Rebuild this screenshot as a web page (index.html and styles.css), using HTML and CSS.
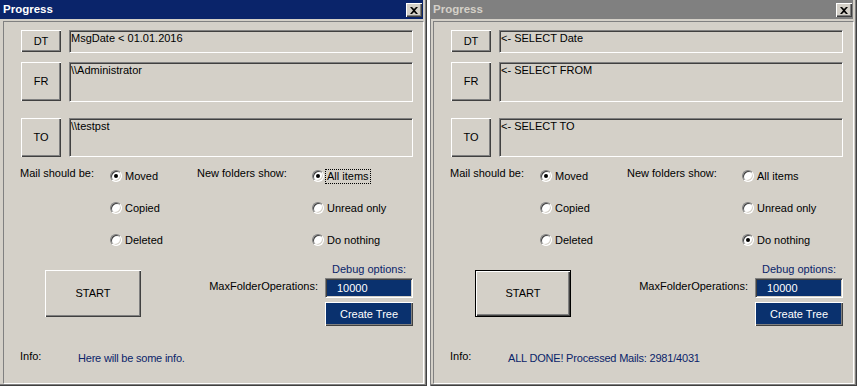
FILE: index.html
```html
<!DOCTYPE html>
<html lang="en">
<head>
    <meta charset="UTF-8">
    <title>Progress</title>
    <link rel="stylesheet" href="styles.css">
</head>
<body>
<div class="desktop">
    <div class="window">
        <div class="titlebar">
            <span class="title">Progress</span>
            <button class="close-btn">
                <svg width="8" height="7" viewBox="0 0 8 7"><path d="M0 0h2l2 2 2-2h2L5 3.5 8 7H6L4 5 2 7H0l3-3.5z" fill="#000"/></svg>
            </button>
        </div>
        <div class="client">
            <div class="query-row row-dt">
                <button class="btn query-btn">DT</button>
                <div class="field">MsgDate &lt; 01.01.2016</div>
            </div>
            <div class="query-row row-fr">
                <button class="btn query-btn">FR</button>
                <div class="field">\\Administrator</div>
            </div>
            <div class="query-row row-to">
                <button class="btn query-btn">TO</button>
                <div class="field">\\testpst</div>
            </div>
            <div class="options">
                <span class="opt-label">Mail should be:</span>
                <label class="radio-item"><span class="radio checked"></span><span class="radio-text">Moved</span></label>
                <span class="opt-label">New folders show:</span>
                <label class="radio-item"><span class="radio checked"></span><span class="radio-text focused">All items</span></label>

                <span></span>
                <label class="radio-item"><span class="radio"></span><span class="radio-text">Copied</span></label>
                <span></span>
                <label class="radio-item"><span class="radio"></span><span class="radio-text">Unread only</span></label>

                <span></span>
                <label class="radio-item"><span class="radio"></span><span class="radio-text">Deleted</span></label>
                <span></span>
                <label class="radio-item"><span class="radio"></span><span class="radio-text">Do nothing</span></label>
            </div>
            <div class="lower">
                <button class="btn start-btn">START</button>
                <div class="debug">
                    <span class="debug-title">Debug options:</span>
                    <span class="max-label">MaxFolderOperations:</span>
                    <div class="max-field">10000</div>
                    <button class="tree-btn">Create Tree</button>
                </div>
            </div>
            <div class="info">
                <span class="info-label">Info:</span>
                <span class="info-text">Here will be some info.</span>
            </div>
        </div>
    </div>

    <div class="window inactive">
        <div class="titlebar">
            <span class="title">Progress</span>
            <button class="close-btn">
                <svg width="8" height="7" viewBox="0 0 8 7"><path d="M0 0h2l2 2 2-2h2L5 3.5 8 7H6L4 5 2 7H0l3-3.5z" fill="#000"/></svg>
            </button>
        </div>
        <div class="client">
            <div class="query-row row-dt">
                <button class="btn query-btn">DT</button>
                <div class="field">&lt;- SELECT Date</div>
            </div>
            <div class="query-row row-fr">
                <button class="btn query-btn">FR</button>
                <div class="field">&lt;- SELECT FROM</div>
            </div>
            <div class="query-row row-to">
                <button class="btn query-btn">TO</button>
                <div class="field">&lt;- SELECT TO</div>
            </div>
            <div class="options">
                <span class="opt-label">Mail should be:</span>
                <label class="radio-item"><span class="radio checked"></span><span class="radio-text">Moved</span></label>
                <span class="opt-label">New folders show:</span>
                <label class="radio-item"><span class="radio"></span><span class="radio-text">All items</span></label>

                <span></span>
                <label class="radio-item"><span class="radio"></span><span class="radio-text">Copied</span></label>
                <span></span>
                <label class="radio-item"><span class="radio"></span><span class="radio-text">Unread only</span></label>

                <span></span>
                <label class="radio-item"><span class="radio"></span><span class="radio-text">Deleted</span></label>
                <span></span>
                <label class="radio-item"><span class="radio checked"></span><span class="radio-text">Do nothing</span></label>
            </div>
            <div class="lower">
                <button class="btn start-btn default">START</button>
                <div class="debug">
                    <span class="debug-title">Debug options:</span>
                    <span class="max-label">MaxFolderOperations:</span>
                    <div class="max-field">10000</div>
                    <button class="tree-btn">Create Tree</button>
                </div>
            </div>
            <div class="info">
                <span class="info-label">Info:</span>
                <span class="info-text">ALL DONE! Processed Mails: 2981/4031</span>
            </div>
        </div>
    </div>
</div>
</body>
</html>
```

FILE: styles.css
```css
body {
    margin: 0;
    background-color: #ffffff;
    font-family: "Liberation Sans", Arial, sans-serif;
    font-size: 11px;
    line-height: 13px;
    color: #000000;
    height: 388px;
    overflow: hidden;
}

.desktop {
    display: flex;
    gap: 3px;
}

.window {
    width: 427px;
    height: 386px;
    background-color: #d4d0c8;
    display: flex;
    flex-direction: column;
    box-shadow: inset -1px -1px #404040, inset -2px -2px #808080;
}

.window.inactive {
    box-shadow: inset 1px 0 #808080, inset -1px -1px #404040, inset -2px -2px #808080;
}

.titlebar {
    height: 19px;
    margin-right: 4px;
    background-color: #0a246a;
    display: flex;
    justify-content: space-between;
    align-items: flex-start;
    padding-left: 3px;
}

.inactive .titlebar {
    background-color: #808080;
}

.title {
    color: #ffffff;
    font-weight: bold;
    font-size: 11.5px;
    line-height: 19px;
}

.inactive .title {
    color: #d4d0c8;
}

.close-btn {
    width: 16px;
    height: 14px;
    margin-top: 3px;
    margin-right: 1px;
    padding: 0;
    border: none;
    background-color: #d4d0c8;
    box-shadow: inset 1px 1px #ffffff, inset -1px -1px #404040, inset -2px -2px #808080;
    display: flex;
    align-items: center;
    justify-content: center;
}

.close-btn svg {
    display: block;
    margin-left: -1px;
}

.client {
    flex: 1;
    margin: 2px 3px 2px 3px;
    border-top: 1px solid #808080;
    border-left: 1px solid #808080;
    border-right: 1px solid #ffffff;
    border-bottom: 1px solid #ffffff;
    padding: 8px 0 0 16px;
    display: flex;
    flex-direction: column;
}

/* query rows: DT / FR / TO */
.query-row {
    display: flex;
    align-items: flex-start;
    gap: 8px;
    margin-left: 1px;
}

.row-dt {
    height: 23px;
}

.row-fr {
    margin-top: 9px;
    height: 40px;
}

.row-to {
    margin-top: 16px;
    height: 40px;
}

.btn {
    background-color: #d4d0c8;
    border: none;
    padding: 0;
    font: inherit;
    color: #000000;
    box-sizing: border-box;
    box-shadow: inset 1px 1px #ffffff, inset -1px -1px #404040, inset -2px -2px #808080;
}

.btn.default {
    border: 1px solid #000000;
}

.query-btn {
    width: 40px;
    height: 39px;
}

.row-dt .query-btn {
    height: 22px;
}

.field {
    width: 344px;
    height: 100%;
    box-sizing: border-box;
    border: 1px solid;
    border-color: #808080 #ffffff #ffffff #808080;
    box-shadow: inset 1px 1px #404040, inset -1px -1px #d4d0c8;
    padding: 1px 1px 0 1px;
}

.row-to .field {
    height: 39px;
}

/* radio groups */
.options {
    margin-top: 2px;
    display: grid;
    grid-template-columns: 90px 87px 115px auto;
    grid-auto-rows: 32px;
    align-items: center;
}

.opt-label {
    align-self: start;
    margin-top: 7px;
}

.radio-item {
    display: flex;
    align-items: center;
    gap: 1px;
}

.radio {
    width: 12px;
    height: 12px;
    box-sizing: border-box;
    border-radius: 50%;
    background-color: #ffffff;
    border: 1px solid;
    border-color: #808080 #ffffff #ffffff #808080;
    box-shadow: inset 1px 1px #404040, inset -1px -1px #d4d0c8;
    display: flex;
    align-items: center;
    justify-content: center;
}

.radio.checked::after {
    content: '';
    width: 4px;
    height: 4px;
    border-radius: 50%;
    background-color: #000000;
}

.radio-text {
    border: 1px dotted transparent;
    padding: 0 1px;
    margin-top: 1px;
}

.radio-text.focused {
    border-color: #000000;
}

/* start + debug area */
.lower {
    display: flex;
    align-items: flex-start;
    height: 70px;
}

.start-btn {
    width: 96px;
    height: 47px;
    margin-left: 25px;
    margin-top: 14px;
}

.debug {
    margin-left: auto;
    margin-right: 10px;
    margin-top: 7px;
    display: grid;
    grid-template-columns: auto 88px;
    column-gap: 7px;
}

.debug-title {
    grid-column: 2;
    justify-self: center;
    color: #0a246a;
    margin-bottom: 2px;
}

.max-label {
    grid-column: 1;
    align-self: start;
    margin-top: 2px;
}

.max-field {
    grid-column: 2;
    height: 20px;
    box-sizing: border-box;
    background-color: #0a316e;
    color: #ffffff;
    border: 1px solid;
    border-color: #808080 #ffffff #ffffff #808080;
    box-shadow: inset 1px 1px #404040, inset -1px -1px #d4d0c8;
    padding: 3px 0 0 11px;
}

.tree-btn {
    grid-column: 2;
    height: 24px;
    margin-top: 4px;
    padding: 0;
    border: none;
    background-color: #0a316e;
    color: #ffffff;
    font-family: inherit;
    font-size: 11px;
    box-shadow: inset 1px 1px #ffffff, inset -1px -1px #404040, inset -2px -2px #808080;
}

.info {
    margin-top: 24px;
    display: flex;
    align-items: flex-start;
}

.info-label {
    width: 58px;
}

.info-text {
    margin-top: 2px;
    color: #0a246a;
    letter-spacing: -0.2px;
}
```
